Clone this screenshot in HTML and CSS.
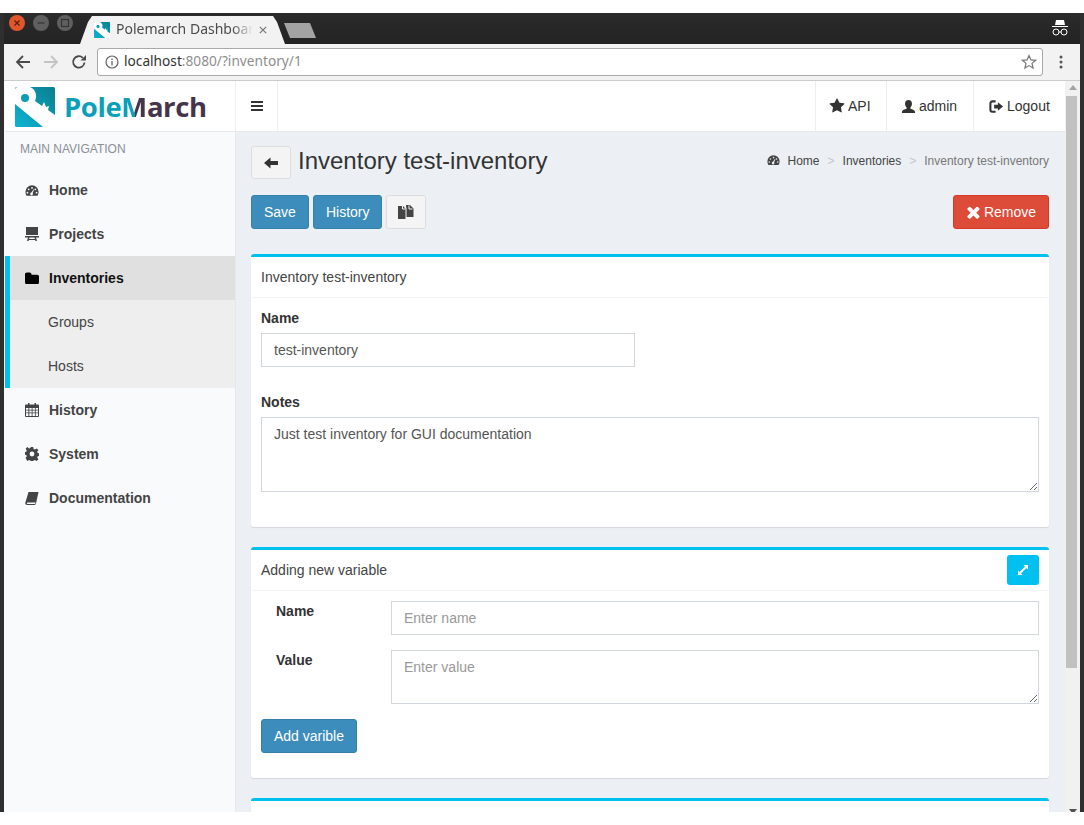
FILE: index.html
```html
<!DOCTYPE html>
<html lang="en">
<head>
<meta charset="utf-8">
<title>Polemarch Dashboard</title>
<link rel="stylesheet" href="styles.css">
</head>
<body>
<div class="window">
  <div class="tabstrip">
    <div class="winbtns">
      <span class="winbtn close"><svg viewBox="0 0 16 16" width="16" height="16"><path d="M5.5 5.5l5 5M10.500 5.500l-5 5" stroke="#5a1d08" stroke-width="1.200"/></svg></span>
      <span class="winbtn"><svg viewBox="0 0 16 16" width="16" height="16"><path d="M4.500 8h7" stroke="#333" stroke-width="1.200"/></svg></span>
      <span class="winbtn"><svg viewBox="0 0 16 16" width="16" height="16"><rect x="4.500" y="4.500" width="7" height="7" fill="none" stroke="#333" stroke-width="1.200"/></svg></span>
    </div>
    <div class="tab">
      <svg class="favicon" viewBox="0 0 40 40" width="16" height="16"><use href="#logo-mark"/></svg>
      <span class="tabtitle">Polemarch Dashboard</span>
      <svg class="tabclose" viewBox="0 0 10 10" width="8" height="8"><path d="M1 1l8 8M9 1l-8 8" stroke="#777" stroke-width="1.500"/></svg>
    </div>
    <div class="newtab"></div>
    <svg class="incognito" viewBox="0 0 18 18" width="18" height="18"><path d="M5 1h8l1 5H4zM1 7h16v1H1z" fill="#fff"/><circle cx="5" cy="13" r="3" fill="none" stroke="#fff"/><circle cx="13" cy="13" r="3" fill="none" stroke="#fff"/><path d="M8 13h2" stroke="#fff"/></svg>
  </div>
  <div class="toolbar">
    <svg class="navicon" viewBox="0 0 16 16" width="16" height="16"><path d="M15 8H2M8 2L2 8l6 6" fill="none" stroke="#4a4a4a" stroke-width="1.800"/></svg>
    <svg class="navicon" viewBox="0 0 16 16" width="16" height="16"><path d="M1 8h13M8 2l6 6-6 6" fill="none" stroke="#c4c4c4" stroke-width="1.800"/></svg>
    <svg class="navicon" viewBox="0 0 16 16" width="16" height="16"><path d="M13.500 8.500A5.700 5.700 0 1 1 11.800 3.800" fill="none" stroke="#4a4a4a" stroke-width="1.800"/><path d="M9.500 6.500H15V1z" fill="#4a4a4a"/></svg>
    <div class="omnibox">
      <svg class="infoicon" viewBox="0 0 14 14" width="14" height="14"><circle cx="7" cy="7" r="6" fill="none" stroke="#666" stroke-width="1.200"/><path d="M7 6v4.500M7 3.500v1.500" stroke="#666" stroke-width="1.300"/></svg>
      <span class="url"><span class="host">localhost</span>:8080/?inventory/1</span>
      <svg class="staricon" viewBox="0 0 16 16" width="16" height="16"><path d="M8 1.600l1.900 4.300 4.700.4-3.600 3.100 1.100 4.600L8 11.600l-4.100 2.400L5 9.400 1.400 6.300l4.700-.4z" fill="none" stroke="#777" stroke-width="1.200"/></svg>
    </div>
    <svg class="menuicon" viewBox="0 0 4 14" width="4" height="14"><circle cx="2" cy="2" r="1.500" fill="#555"/><circle cx="2" cy="7" r="1.500" fill="#555"/><circle cx="2" cy="12" r="1.500" fill="#555"/></svg>
  </div>
  <div class="viewport">
    <div class="page">
      <header class="navbar">
        <a class="brand">
          <svg class="logomark" viewBox="0 0 40 40" width="40" height="40">
            <defs>
              <linearGradient id="logo-grad" x1="0" y1="1" x2="1" y2="0"><stop offset="0" stop-color="#0bb4d2"/><stop offset="1" stop-color="#0a7f8f"/></linearGradient>
              <g id="logo-mark">
                <rect width="40" height="40" rx="1.500" fill="url(#logo-grad)"/>
                <path d="M2 0H15A10 10 0 0 1 20 14L27 19 29 15 31 20 34 19 33 23 40 28V40H28L0 17V2z" fill="#fff"/>
                <circle cx="10" cy="11" r="4" fill="#0b9db8"/>
              </g>
            </defs>
            <use href="#logo-mark"/>
          </svg>
          <span class="logotext"><span class="lt-pole">Pole</span><span class="lt-m">M</span><span class="lt-arch">arch</span></span>
        </a>
        <a class="navcell toggle"><svg viewBox="0 0 12 10" width="12" height="10"><path d="M0 1h12M0 5h12M0 9h12" stroke="#333" stroke-width="2"/></svg></a>
        <div class="navright">
          <a class="navcell"><svg class="ic" viewBox="0 0 1792 1792" width="16" height="16"><path d="M1728 647q0 22-26 48l-363 354 86 500q1 7 1 20 0 21-10.500 35.500t-30.500 14.500q-19 0-40-12l-449-236-449 236q-22 12-40 12-21 0-31.500-14.500t-10.500-35.500q0-6 2-20l86-500-364-354q-25-27-25-48 0-37 56-46l502-73 225-455q19-41 49-41t49 41l225 455 502 73q56 9 56 46z" fill="#333"/></svg>API</a>
          <a class="navcell"><svg class="ic" viewBox="0 0 16 16" width="15" height="15"><path d="M8 1c2.400 0 3.700 1.700 3.700 4 0 1.600-.7 3-1.600 3.800v1.500c2 .6 4.900 1.500 4.900 3.700v1H1v-1c0-2.200 2.900-3.100 4.900-3.700V8.800C5 8 4.300 6.600 4.300 5 4.300 2.700 5.600 1 8 1z" fill="#333"/></svg>admin</a>
          <a class="navcell"><svg class="ic" viewBox="0 0 16 16" width="15" height="15"><path d="M7 2.500H3.500a2 2 0 0 0-2 2v7a2 2 0 0 0 2 2H7" fill="none" stroke="#333" stroke-width="2.200"/><path d="M9.500 3.500l5.500 4.500-5.500 4.500V10H5.500V6h4z" fill="#333"/></svg>Logout</a>
        </div>
      </header>
      <div class="content">
        <aside class="sidebar">
          <div class="sidehead">MAIN NAVIGATION</div>
          <nav class="menu">
            <a class="item"><svg class="mi" viewBox="0 0 16 14" width="14" height="13"><path fill-rule="evenodd" d="M8 1a7.500 7.500 0 0 1 7.500 7.500c0 1.800-.5 3.400-1.300 4.500H1.800C1 11.900.5 10.300.5 8.500A7.500 7.500 0 0 1 8 1zM8 3a1 1 0 1 0 0 2 1 1 0 0 0 0-2zM4.200 4.700a1 1 0 1 0 0 2 1 1 0 0 0 0-2zM11.800 4.700a1 1 0 1 0 0 2 1 1 0 0 0 0-2zM2.800 8.500a1 1 0 1 0 0 2 1 1 0 0 0 0-2zM13.200 8.500a1 1 0 1 0 0 2 1 1 0 0 0 0-2zM9.900 5.500L7.300 9.200a1.600 1.600 0 1 0 1.500.6l1.600-4z" fill="#444"/></svg><span>Home</span></a>
            <a class="item"><svg class="mi" viewBox="0 0 14 14" width="14" height="14"><path d="M1 0h12v8H1zM0 9h14v1.500H0zM3 10.500h1.500L3.500 14H2zM9.500 10.500H11l1 3.500h-1.500zM4 12h6v1H4z" fill="#444"/></svg><span>Projects</span></a>
            <a class="item active"><svg class="mi" viewBox="0 0 1664 1400" width="14" height="12"><path d="M1664 528v704q0 92-66 158t-158 66H224q-92 0-158-66T0 1232V272q0-92 66-158t158-66h320q92 0 158 66t66 158v32h672q92 0 158 66t66 158z" fill="#000"/></svg><span>Inventories</span></a>
            <div class="submenu">
              <a class="subitem">Groups</a>
              <a class="subitem">Hosts</a>
            </div>
            <a class="item"><svg class="mi" viewBox="0 0 14 14" width="14" height="14"><path fill-rule="evenodd" d="M3 0h1.500v1.500h5V0H11v1.500h2a1 1 0 0 1 1 1V13a1 1 0 0 1-1 1H1a1 1 0 0 1-1-1V2.500a1 1 0 0 1 1-1h2zM1 5v1.800h2.400V5zM4.300 5v1.800h2.400V5zM7.500 5v1.800h2.400V5zM10.700 5v1.800H13V5zM1 7.600v1.800h2.400V7.600zM4.300 7.600v1.800h2.400V7.600zM7.500 7.600v1.800h2.400V7.600zM10.700 7.600v1.800H13V7.600zM1 10.200V13h2.400v-2.800zM4.300 10.200V13h2.400v-2.800zM7.500 10.200V13h2.400v-2.800zM10.700 10.200V13H13v-2.800z" fill="#444"/></svg><span>History</span></a>
            <a class="item"><svg class="mi" viewBox="0 0 14 14" width="14" height="14"><path fill-rule="evenodd" d="M5.800 0h2.400l.4 2 1.300.5 1.800-1.100 1.700 1.700-1.200 1.700.5 1.300 2 .4v2.400l-2 .4-.5 1.300 1.200 1.700-1.700 1.700-1.800-1.100-1.300.5-.4 2H5.800l-.4-2-1.300-.5-1.800 1.100L.6 10.900l1.200-1.700-.5-1.300-2-.4V5.100l2-.4.5-1.300L.6 1.700 2.300 0l1.800 1.400 1.300-.5zM7 4.600a2.400 2.400 0 1 0 0 4.800 2.400 2.400 0 0 0 0-4.800z" fill="#444"/></svg><span>System</span></a>
            <a class="item"><svg class="mi" viewBox="0 0 14 14" width="14" height="14"><path d="M3.500 1H13.500L11 12.500c-.2.800-.9 1.500-1.800 1.500H2C.8 14 0 13 .3 11.800zM2.500 11.500c-.7 0-1 1.500 0 1.500h7c.5 0 .8-.3 1-.8l.2-.7z" fill="#444" fill-rule="evenodd"/></svg><span>Documentation</span></a>
          </nav>
        </aside>
        <main class="main">
          <div class="titlerow">
            <a class="btn btn-default back"><svg viewBox="0 0 14 12" width="14" height="12"><path d="M6.500 0.500v3.500H14v4H6.500v3.500L0 6z" fill="#333"/></svg></a>
            <h1 class="pagetitle">Inventory test-inventory</h1>
            <ol class="crumbs">
              <li><svg class="crumbicon" viewBox="0 0 16 14" width="13" height="12"><path fill-rule="evenodd" d="M8 1a7.500 7.500 0 0 1 7.500 7.500c0 1.800-.5 3.400-1.300 4.500H1.800C1 11.900.5 10.300.5 8.500A7.500 7.500 0 0 1 8 1zM8 3a1 1 0 1 0 0 2 1 1 0 0 0 0-2zM4.200 4.700a1 1 0 1 0 0 2 1 1 0 0 0 0-2zM11.800 4.700a1 1 0 1 0 0 2 1 1 0 0 0 0-2zM2.800 8.500a1 1 0 1 0 0 2 1 1 0 0 0 0-2zM13.200 8.500a1 1 0 1 0 0 2 1 1 0 0 0 0-2zM9.900 5.500L7.300 9.200a1.600 1.600 0 1 0 1.500.6l1.600-4z" fill="#444"/></svg>Home</li>
              <li class="sep">&gt;</li>
              <li>Inventories</li>
              <li class="sep">&gt;</li>
              <li class="current">Inventory test-inventory</li>
            </ol>
          </div>
          <div class="actions">
            <a class="btn btn-primary">Save</a>
            <a class="btn btn-primary">History</a>
            <a class="btn btn-default copy"><svg viewBox="0 0 16 15" width="16" height="15"><path d="M0 1h5l2.500 2.500V14H0zM8 0h4l3.500 3.500V12H8.500V3L8 2z" fill="#444"/><path d="M11 0.500v3.500h3.500M4.500 1v3h3" fill="none" stroke="#f4f4f4"/></svg></a>
            <a class="btn btn-danger remove"><svg class="ic" viewBox="300 300 1200 1270" width="13" height="13"><path d="M1490 1322q0 40-28 68l-136 136q-28 28-68 28t-68-28l-294-294-294 294q-28 28-68 28t-68-28l-136-136q-28-28-28-68t28-68l294-294-294-294q-28-28-28-68t28-68l136-136q28-28 68-28t68 28l294 294 294-294q28-28 68-28t68 28l136 136q28 28 28 68t-28 68l-294 294 294 294q28 28 28 68z" fill="#fff"/></svg>Remove</a>
          </div>

          <section class="panel panel-one">
            <div class="panelhead"><span>Inventory test-inventory</span></div>
            <div class="panelbody">
              <label class="lbl">Name</label>
              <input class="field field-name" type="text" value="test-inventory">
              <label class="lbl lbl-notes">Notes</label>
              <textarea class="field area-notes">Just test inventory for GUI documentation</textarea>
            </div>
          </section>

          <section class="panel panel-two">
            <div class="panelhead">
              <span>Adding new variable</span>
              <a class="expand"><svg viewBox="0 0 10 10" width="10" height="10"><path d="M5.500 0H10v4.500L8.400 3 3 8.400 4.500 10H0V5.500L1.600 7 7 1.600z" fill="#fff"/></svg></a>
            </div>
            <div class="panelbody body-two">
              <div class="varrow">
                <label class="lbl varlbl">Name</label>
                <input class="field" type="text" placeholder="Enter name">
              </div>
              <div class="varrow">
                <label class="lbl varlbl">Value</label>
                <textarea class="field area-value" placeholder="Enter value"></textarea>
              </div>
              <a class="btn btn-primary addvar">Add varible</a>
            </div>
          </section>

          <section class="panel panel-three"></section>
        </main>
      </div>
    </div>
    <div class="scrollbar">
      <span class="arrow up"></span>
      <span class="thumb"></span>
      <span class="arrow down"></span>
    </div>
  </div>
</div>
</body>
</html>
```

FILE: styles.css
```css
* { box-sizing: border-box; }
html, body { margin: 0; padding: 0; background: #fff; }
body { font-family: "Liberation Sans", Arial, sans-serif; font-size: 14px; color: #333; overflow: hidden; }
a { color: inherit; text-decoration: none; }

.window {
  margin-top: 13px;
  width: 1084px;
  height: 799px;
  display: flex;
  flex-direction: column;
  border-left: 4px solid #2f2f2f;
  border-right: 4px solid #2f2f2f;
  overflow: hidden;
}

/* browser chrome */
.tabstrip {
  height: 31px;
  margin: 0 -4px;
  flex: none;
  display: flex;
  align-items: flex-start;
  background: linear-gradient(#2b2b2b, #232323);
}
.winbtns { display: flex; gap: 8px; margin: 2px 0 0 9px; flex: none; }
.winbtn {
  width: 16px; height: 16px; border-radius: 50%;
  background: #5f5f5f;
  display: block;
}
.winbtn svg { display: block; }
.winbtn.close { background: #e2562b; }
.tab {
  width: 205px;
  height: 28px;
  margin: 3px 0 0 7px;
  padding: 0 18px 0 14px;
  background: #f2f2f2;
  clip-path: polygon(0 100%, 8px 6px, 12px 0, 193px 0, 197px 6px, 205px 100%);
  display: flex;
  align-items: center;
  gap: 6px;
  flex: none;
}
.favicon { flex: none; margin-top: 0; }
.tabtitle {
  font-family: "Noto Sans", sans-serif;
  font-size: 14px;
  line-height: 20px;
  padding-bottom: 2px;
  color: #4b4b4b;
  white-space: nowrap;
  overflow: hidden;
  flex: 1;
  min-width: 0;
  -webkit-mask-image: linear-gradient(to right, #000 85%, transparent 100%);
  mask-image: linear-gradient(to right, #000 85%, transparent 100%);
}
.tabclose { flex: none; }
.newtab {
  width: 32px; height: 15px; margin: 10px 0 0 -1px;
  background: #a3a3a3;
  clip-path: polygon(0 0, 26px 0, 32px 100%, 6px 100%);
  flex: none;
}
.incognito { margin: 6px 15px 0 auto; flex: none; }

.toolbar {
  height: 37px;
  flex: none;
  display: flex;
  align-items: flex-start;
  background: #f2f2f2;
  border-bottom: 1px solid #ccc;
  padding: 10px 0 0 11px;
}
.navicon { flex: none; margin-right: 12px; margin-top: 0; }
.omnibox {
  width: 946px;
  height: 28px;
  margin: -6px 0 0 -2px;
  background: #fff;
  border: 1px solid #a9a9a9;
  border-radius: 3px;
  display: flex;
  align-items: center;
  padding: 0 5px 0 7px;
  flex: none;
}
.infoicon { flex: none; }
.url { font-family: "Noto Sans", sans-serif; font-size: 13.700px; line-height: 20px; padding-bottom: 2px; color: #8e8e8e; margin-left: 5px; flex: 1; white-space: nowrap; }
.host { color: #333; }
.staricon { flex: none; }
.menuicon { margin: 1px 0 0 16px; flex: none; }

/* page */
.viewport { flex: 1; display: flex; min-height: 0; background: #f9fafc; }
.page { flex: 1; min-width: 0; display: flex; flex-direction: column; margin-left: 1px; }
.navbar {
  height: 51px;
  flex: none;
  display: flex;
  background: #fff;
  border-bottom: 1px solid #e6e8ec;
}
.brand { width: 230px; flex: none; display: flex; align-items: center; padding: 0 0 0 10px; gap: 9px; }
.logomark { flex: none; margin-top: 1px; }
.logotext { font-family: "Open Sans", sans-serif; font-weight: 700; font-size: 27.500px; line-height: 1; letter-spacing: -0.400px; margin-top: 2px; white-space: nowrap; }
.lt-pole { color: #0c9fb9; }
.lt-m {
  background: linear-gradient(to right, #0c9fb9 55%, #45344a 55%);
  -webkit-background-clip: text;
  background-clip: text;
  color: transparent;
}
.lt-arch { color: #45344a; }
.navcell {
  display: flex;
  align-items: center;
  padding: 0 15px;
  border-left: 1px solid #eee;
  color: #333;
  white-space: nowrap;
}
.toggle { width: 43px; justify-content: center; padding: 0; border-right: 1px solid #eee; }
.navright { margin-left: auto; display: flex; }
.ic { margin-right: 3px; flex: none; }
.navright .navcell:nth-child(1) { width: 71px; padding-left: 13px; }
.navright .navcell:nth-child(2) { width: 87px; padding-left: 14px; }
.navright .navcell:nth-child(3) { width: 92px; }

.content { flex: 1; display: flex; min-height: 0; }
.sidebar { width: 231px; flex: none; background: #f9fafc; border-right: 1px solid #e6e8ec; }
.sidehead { height: 36px; padding: 10px 0 0 15px; font-size: 12px; line-height: 14px; color: #8a8f96; }
.item {
  height: 44px;
  display: flex;
  align-items: center;
  padding-left: 20px;
  font-weight: 700;
  color: #444;
}
.mi { flex: none; margin-right: 10px; }
.item.active { background: #e0e0e0; color: #111; border-left: 5px solid #00c0ef; padding-left: 15px; }
.submenu { background: #eee; border-left: 5px solid #00c0ef; }
.subitem { height: 44px; display: flex; align-items: center; padding-left: 38px; color: #444; }

.main { flex: 1; min-width: 0; background: #ecf0f5; padding: 14px 16px 0 15px; overflow: hidden; }
.titlerow { display: flex; align-items: flex-start; height: 49px; }
.btn {
  display: inline-flex;
  align-items: center;
  justify-content: center;
  height: 34px;
  padding: 0 12px;
  border: 1px solid transparent;
  border-radius: 3px;
  line-height: 20px;
  white-space: nowrap;
}
.btn-primary { background: #3c8dbc; border-color: #367fa9; color: #fff; }
.btn-default { background: #f4f4f4; border-color: #ddd; color: #444; }
.btn-danger { background: #dd4b39; border-color: #d73925; color: #fff; }
.back { width: 40px; height: 33px; padding: 0; flex: none; }
.pagetitle { margin: 0 0 0 7px; font-size: 24px; font-weight: 400; line-height: 30px; color: #333; }
.crumbs {
  list-style: none;
  margin: 0 0 0 auto;
  padding: 8px 0 0;
  display: flex;
  gap: 8px;
  font-size: 12px;
  line-height: 14px;
  color: #444;
}
.crumbicon { margin-right: 8px; vertical-align: -1px; }
.sep { color: #c4c6ca; }
.current { color: #777; }

.actions { display: flex; gap: 4px; height: 59px; align-items: flex-start; }
.copy { width: 40px; padding: 0; }
.remove { margin-left: auto; width: 96px; padding: 0 0 0 1px; }
.remove .ic { margin-right: 4px; }

.panel {
  background: #fff;
  border-top: 3px solid #00c0ef;
  border-radius: 3px;
  box-shadow: 0 1px 1px rgba(0, 0, 0, .1);
  margin-bottom: 20px;
}
.panelhead {
  height: 41px;
  display: flex;
  align-items: center;
  justify-content: space-between;
  padding: 0 10px;
  border-bottom: 1px solid #f4f4f4;
  color: #444;
}
.panelbody { padding: 10px 10px 35px; display: flex; flex-direction: column; align-items: stretch; }
.lbl { display: block; font-weight: 700; line-height: 20px; margin-bottom: 5px; color: #333; }
.lbl-notes { margin-top: 25px; }
.field {
  display: block;
  width: 100%;
  height: 34px;
  padding: 6px 12px;
  border: 1px solid #d2d6de;
  border-radius: 0;
  background: #fff;
  font-family: inherit;
  font-size: 14px;
  line-height: 20px;
  color: #555;
  outline: none;
}
.field::placeholder { color: #999; opacity: 1; }
.field-name { width: 374px; }
.area-notes { height: 75px; }
.area-value { height: 54px; }
.expand { width: 32px; height: 30px; background: #00c0ef; border-radius: 3px; display: flex; align-items: center; justify-content: center; }
.body-two { padding-bottom: 25px; }
.varrow { display: flex; align-items: flex-start; margin-bottom: 15px; }
.varlbl { width: 130px; padding-left: 15px; margin: 0; flex: none; }
.addvar { width: 96px; padding: 0; }
.panel-three { height: 60px; }

.scrollbar {
  width: 15px;
  flex: none;
  background: #f1f1f1;
  display: flex;
  flex-direction: column;
  align-items: center;
  position: relative;
}
.thumb { display: block; width: 11px; height: 572px; margin: 6px 2px 0 0; background: #c1c1c1; }
.arrow { display: block; width: 0; height: 0; border-left: 4px solid transparent; border-right: 4px solid transparent; }
.arrow.up { border-bottom: 5px solid #a3a3a3; margin-top: 4px; }
.arrow.down { border-top: 5px solid #505050; margin-top: auto; margin-bottom: -2px; }
```
